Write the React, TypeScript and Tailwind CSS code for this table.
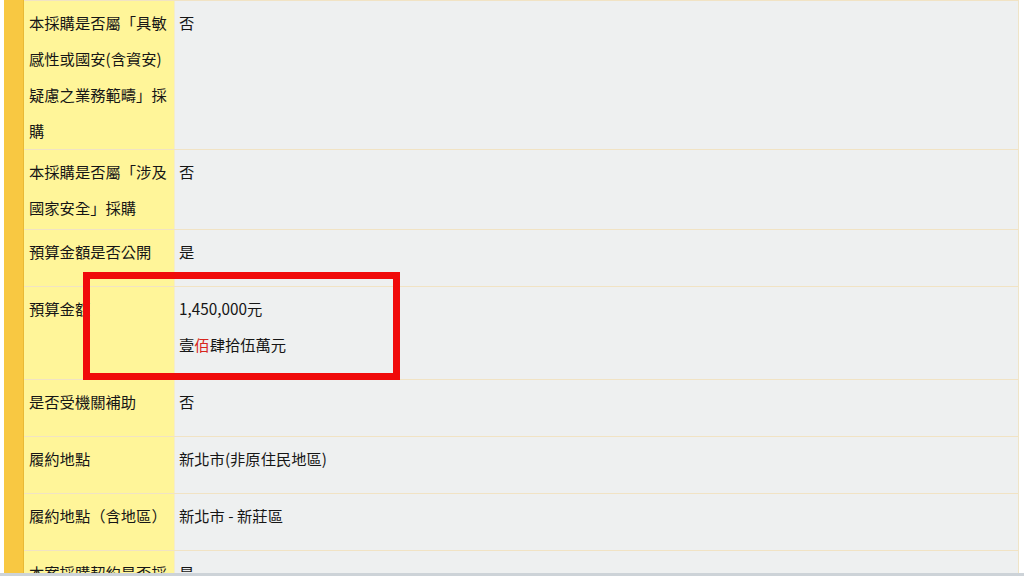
import React from "react";

type Row = {
  label: React.ReactNode;
  value: React.ReactNode;
  h: string;
};

const rows: Row[] = [
  {
    label: (
      <>
        本採購是否屬「具敏
        <br />
        感性或國安(含資安)
        <br />
        疑慮之業務範疇」採
        <br />
        購
      </>
    ),
    value: "否",
    h: "h-[149px]",
  },
  {
    label: (
      <>
        本採購是否屬「涉及
        <br />
        國家安全」採購
      </>
    ),
    value: "否",
    h: "h-[80px]",
  },
  { label: "預算金額是否公開", value: "是", h: "h-[57px]" },
  {
    label: "預算金額",
    value: (
      <>
        1,450,000元
        <br />
        壹<span className="text-[#d7261e]">佰</span>肆拾伍萬元
      </>
    ),
    h: "h-[93px]",
  },
  { label: "是否受機關補助", value: "否", h: "h-[57px]" },
  { label: "履約地點", value: "新北市(非原住民地區)", h: "h-[57px]" },
  { label: "履約地點（含地區）", value: "新北市 - 新莊區", h: "h-[57px]" },
  { label: "本案採購契約是否採", value: "是", h: "h-[57px]" },
];

export default function App() {
  return (
    <div
      className="relative h-[576px] w-[1024px] overflow-hidden bg-white flex flex-col text-[15.3px] leading-[36px] text-[#161616]"
      style={{ fontFamily: '"Noto Sans CJK TC", "Noto Sans", sans-serif' }}
    >
      <div className="flex flex-1 overflow-hidden pl-[4px] pr-[5px]">
        {/* orange side bar */}
        <div className="w-[20px] shrink-0 bg-[#f8c842] border-r border-[#e9b935]" />
        <div className="flex-1 flex flex-col border-t border-[#f1e3c4] border-r border-r-[#efe4c6]">
          {rows.map((r, i) => (
            <div
              key={i}
              className={`flex shrink-0 ${r.h} border-b border-[#f1e3c4]`}
            >
              <div className="w-[151px] shrink-0 bg-[#fff599] border-r border-[#f4eccd] pl-[5px] pt-[3px] whitespace-nowrap">
                {r.label}
              </div>
              <div className="flex-1 bg-[#eef0f0] pl-[4px] pt-[3px] whitespace-nowrap">
                {r.value}
              </div>
            </div>
          ))}
        </div>
      </div>
      <div className="h-[3px] shrink-0 bg-[#cdd3d8]" />

      {/* red highlight box */}
      <div className="absolute left-[83px] top-[272px] w-[317px] h-[108px] border-[7px] border-[#f00a0a]" />
    </div>
  );
}
